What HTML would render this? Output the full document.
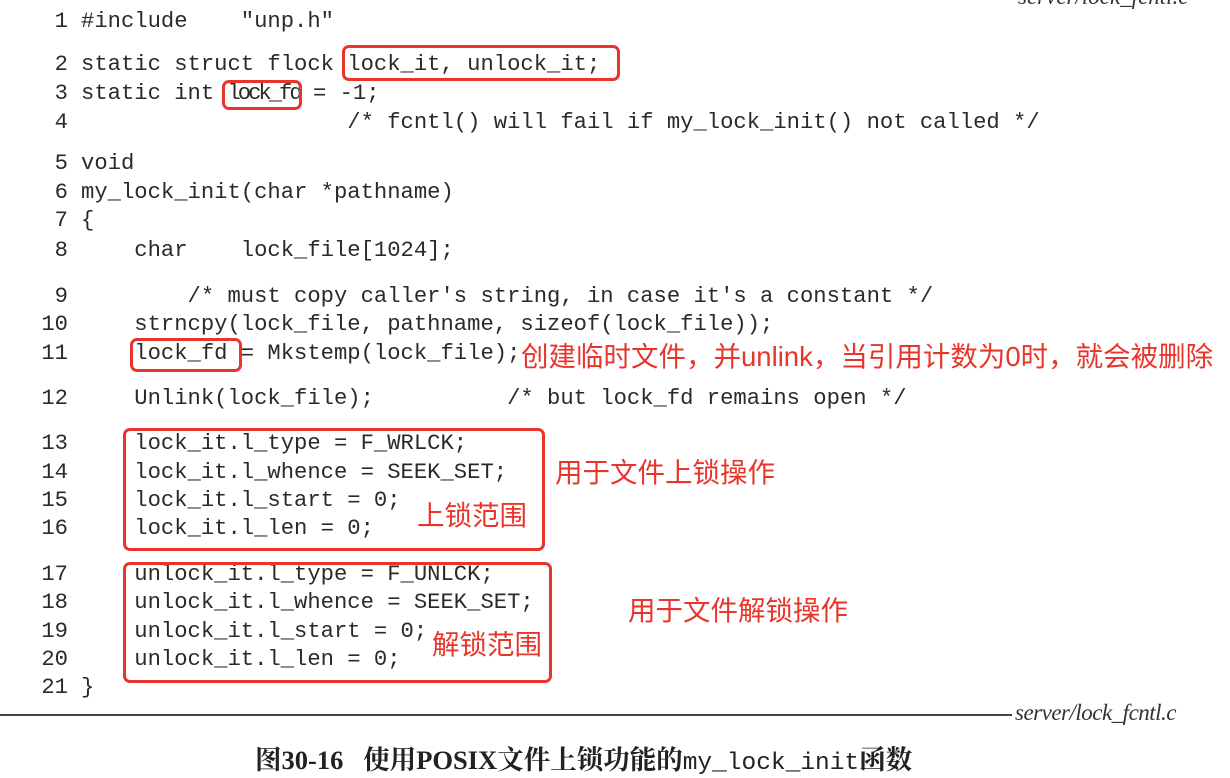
<!DOCTYPE html>
<html><head><meta charset="utf-8"><style>
body{margin:0;width:1230px;height:778px;background:#fff;position:relative;overflow:hidden;font-family:"Liberation Mono",monospace;}
.l{position:absolute;left:0;height:30px;line-height:30px;font-size:22.2px;color:#2a2a2a;white-space:pre;}
.n{display:inline-block;width:68px;text-align:right;margin-right:13px;}
.b{position:absolute;border:3.5px solid #e8352b;border-radius:7px;box-sizing:border-box;}
.r{position:absolute;color:#e8352b;font-family:"Liberation Sans","Noto Sans CJK SC",sans-serif;font-size:27.5px;line-height:30px;white-space:nowrap;}
</style></head><body>
<div style="position:absolute;left:1018px;top:-16px;font:italic 23px 'Liberation Serif',serif;color:#333">server/lock_fcntl.c</div>
<div class="l" style="top:7px"><span class="n">1</span>#include    "unp.h"</div>
<div class="l" style="top:50px"><span class="n">2</span>static struct flock lock_it, unlock_it;</div>
<div class="l" style="top:79px"><span class="n">3</span>static int <span style="letter-spacing:-3px">lock_fd</span> = -1;</div>
<div class="l" style="top:108px"><span class="n">4</span>                    /* fcntl() will fail if my_lock_init() not called */</div>
<div class="l" style="top:149px"><span class="n">5</span>void</div>
<div class="l" style="top:178px"><span class="n">6</span>my_lock_init(char *pathname)</div>
<div class="l" style="top:206px"><span class="n">7</span>{</div>
<div class="l" style="top:236px"><span class="n">8</span>    char    lock_file[1024];</div>
<div class="l" style="top:282px"><span class="n">9</span>        /* must copy caller's string, in case it's a constant */</div>
<div class="l" style="top:310px"><span class="n">10</span>    strncpy(lock_file, pathname, sizeof(lock_file));</div>
<div class="l" style="top:339px"><span class="n">11</span>    lock_fd = Mkstemp(lock_file);</div>
<div class="l" style="top:384px"><span class="n">12</span>    Unlink(lock_file);          /* but lock_fd remains open */</div>
<div class="l" style="top:429px"><span class="n">13</span>    lock_it.l_type = F_WRLCK;</div>
<div class="l" style="top:458px"><span class="n">14</span>    lock_it.l_whence = SEEK_SET;</div>
<div class="l" style="top:486px"><span class="n">15</span>    lock_it.l_start = 0;</div>
<div class="l" style="top:514px"><span class="n">16</span>    lock_it.l_len = 0;</div>
<div class="l" style="top:560px"><span class="n">17</span>    unlock_it.l_type = F_UNLCK;</div>
<div class="l" style="top:588px"><span class="n">18</span>    unlock_it.l_whence = SEEK_SET;</div>
<div class="l" style="top:617px"><span class="n">19</span>    unlock_it.l_start = 0;</div>
<div class="l" style="top:645px"><span class="n">20</span>    unlock_it.l_len = 0;</div>
<div class="l" style="top:673px"><span class="n">21</span>}</div>
<div class="b" style="left:342px;top:45px;width:278px;height:36px"></div>
<div class="b" style="left:222px;top:80px;width:80px;height:30px"></div>
<div class="b" style="left:130px;top:338px;width:112px;height:34px"></div>
<div class="b" style="left:123px;top:428px;width:422px;height:123px"></div>
<div class="b" style="left:123px;top:562px;width:429px;height:121px"></div>
<div class="r" style="left:521px;top:342px">创建临时文件，并unlink，当引用计数为0时，就会被删除</div>
<div class="r" style="left:555px;top:458px">用于文件上锁操作</div>
<div class="r" style="left:417px;top:501px">上锁范围</div>
<div class="r" style="left:628px;top:596px">用于文件解锁操作</div>
<div class="r" style="left:432px;top:630px">解锁范围</div>
<div style="position:absolute;left:0;top:714px;width:1012px;height:2px;background:#444"></div>
<div style="position:absolute;left:1015px;top:700px;font:italic 23px 'Liberation Serif',serif;color:#333;letter-spacing:-0.5px">server/lock_fcntl.c</div>
<div style="position:absolute;left:255px;top:738px;font:bold 26.5px 'Liberation Serif','Noto Serif CJK SC',serif;color:#222;white-space:nowrap">图30-16&nbsp;&nbsp;&nbsp;使用POSIX文件上锁功能的<span style="font:24.5px 'Liberation Mono',monospace">my_lock_init</span>函数</div>
</body></html>
